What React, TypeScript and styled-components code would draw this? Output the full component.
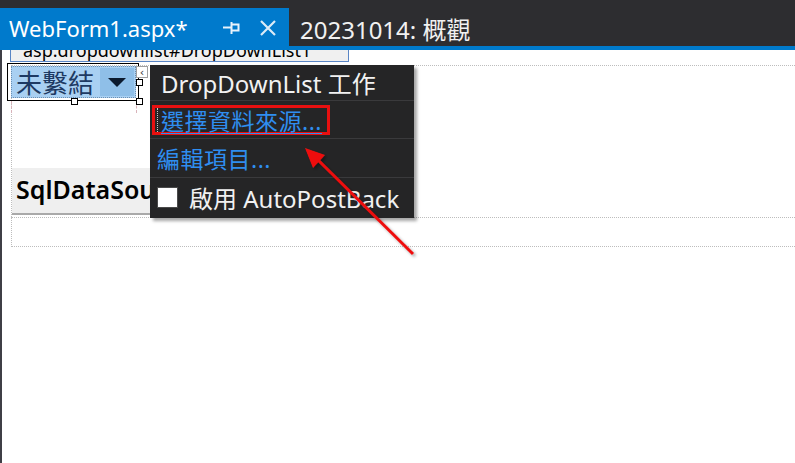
import React from 'react';
import styled, { createGlobalStyle } from 'styled-components';

const GlobalStyle = createGlobalStyle`
  html, body {
    margin: 0;
    padding: 0;
    background: #ffffff;
  }
  body {
    font-family: "Noto Sans", "Noto Sans CJK TC", sans-serif;
  }
`;

export default function App() {
  return (
    <Window>
      <GlobalStyle />
      <TabBar>
        <ActiveTab>
          <TabTitle>WebForm1.aspx*</TabTitle>
          <PinIcon />
          <CloseIcon />
        </ActiveTab>
        <Tab>20231014: 概觀</Tab>
      </TabBar>
      <BlueRule />

      <Designer>
        <TagLabel>
          <span>asp:dropdownlist#DropDownList1</span>
        </TagLabel>

        <FormArea>
          <Selection>
            <Combo>
              <ComboText>未繫結</ComboText>
              <ComboButton>
                <Triangle />
              </ComboButton>
            </Combo>
            <Handle $left={63} $top={34} />
            <Handle $left={128} $top={34} />
            <Handle $left={128} $top={15} />
            <SmartTag>‹</SmartTag>
          </Selection>
          <Guides />
          <SqlSource>SqlDataSource</SqlSource>
        </FormArea>
        <EmptyDiv />

        <TaskPanel>
          <PanelTitle>DropDownList 工作</PanelTitle>
          <PanelRow $height={38}>
            <Highlight>
              <FocusRect>
                <LinkText $underline>選擇資料來源...</LinkText>
              </FocusRect>
            </Highlight>
          </PanelRow>
          <PanelRow $height={39}>
            <LinkText>編輯項目...</LinkText>
          </PanelRow>
          <PanelRow $height={39}>
            <CheckBox />
            <CheckLabel>啟用 AutoPostBack</CheckLabel>
          </PanelRow>
        </TaskPanel>
      </Designer>

      <ArrowOverlay />
    </Window>
  );
}

const PinIcon = () => (
  <IconSvg width="20" height="16" viewBox="0 0 20 16" $ml={0}>
    <path d="M1 7.5h8M9.5 2v12M10 4.5h6.5v6H10" stroke="#e8f2fb" strokeWidth="2" fill="none" />
  </IconSvg>
);

const CloseIcon = () => (
  <IconSvg width="18" height="16" viewBox="0 0 18 16" $ml={17}>
    <path d="M2 1l14 14M16 1L2 15" stroke="#dcebf7" strokeWidth="2.2" fill="none" />
  </IconSvg>
);

const ArrowOverlay = () => (
  <ArrowSvg width="795" height="463" viewBox="0 0 795 463">
    <defs>
      <filter id="shadow" x="-20%" y="-20%" width="140%" height="140%">
        <feDropShadow dx="2" dy="2" stdDeviation="1.5" floodColor="#000" floodOpacity="0.35" />
      </filter>
    </defs>
    <g filter="url(#shadow)">
      <line x1="413" y1="254" x2="316" y2="158" stroke="#ee1111" strokeWidth="3" />
      <polygon points="305,148 325,155 313,168" fill="#ee1111" />
    </g>
  </ArrowSvg>
);

const Window = styled.div`
  position: relative;
  width: 795px;
  height: 463px;
  overflow: hidden;
  background: #ffffff;
`;

const TabBar = styled.div`
  display: flex;
  align-items: flex-end;
  height: 46px;
  background: #2d2d30;
`;

const ActiveTab = styled.div`
  display: flex;
  align-items: center;
  box-sizing: border-box;
  width: 289px;
  height: 38px;
  padding: 2px 12px 0 9px;
  background: #007acc;
`;

const TabTitle = styled.span`
  flex: 1;
  font-size: 22px;
  color: #ffffff;
  line-height: 36px;
  white-space: nowrap;
`;

const IconSvg = styled.svg<{ $ml: number }>`
  display: block;
  flex: none;
  margin-left: ${(p) => p.$ml}px;
`;

const Tab = styled.div`
  display: flex;
  align-items: center;
  height: 38px;
  padding: 2px 0 0 11px;
  box-sizing: border-box;
  font-size: 24px;
  color: #f1f1f1;
  white-space: nowrap;
`;

const BlueRule = styled.div`
  height: 4px;
  background: #007acc;
`;

const Designer = styled.div`
  position: relative;
  display: flex;
  flex-direction: column;
  height: 413px;
  border-left: 2px solid #3f3f46;
  background: #ffffff;
`;

const TagLabel = styled.div`
  box-sizing: border-box;
  width: 339px;
  height: 12px;
  margin-left: 8px;
  background: #f0f0f0;
  border: 1px solid #5a86c5;
  border-top: none;
  overflow: hidden;

  span {
    display: block;
    margin-top: -10px;
    padding-left: 12px;
    font-size: 18px;
    line-height: 20px;
    color: #000000;
    white-space: nowrap;
  }
`;

const FormArea = styled.div`
  display: flex;
  flex-direction: column;
  box-sizing: border-box;
  height: 152px;
  margin: 3px 0 0 9px;
  border-top: 1px dotted #bdbdbd;
  border-left: 1px dotted #bdbdbd;
`;

const Selection = styled.div`
  position: relative;
  box-sizing: border-box;
  width: 132px;
  height: 38px;
  margin: -3px 0 0 -5px;
  padding: 2px 2px 2px 3px;
  border: 1px solid #000000;
`;

const Combo = styled.div`
  display: flex;
  box-sizing: border-box;
  height: 100%;
  background: #a9d0f2;
  border: 1px dotted #6b8fb3;
`;

const ComboText = styled.span`
  flex: 1;
  padding-left: 4px;
  font-family: "Noto Sans CJK TC", sans-serif;
  font-size: 26px;
  line-height: 30px;
  color: #1e3a63;
  white-space: nowrap;
`;

const ComboButton = styled.div`
  display: flex;
  align-items: center;
  justify-content: center;
  width: 34px;
  margin: 1px;
  background: #8fbfe8;
`;

const Triangle = styled.div`
  width: 0;
  height: 0;
  border-left: 9px solid transparent;
  border-right: 9px solid transparent;
  border-top: 9px solid #0b1a2e;
`;

const Handle = styled.div<{ $left: number; $top: number }>`
  position: absolute;
  left: ${(p) => p.$left}px;
  top: ${(p) => p.$top}px;
  box-sizing: border-box;
  width: 7px;
  height: 7px;
  background: #ffffff;
  border: 1px solid #000000;
`;

const SmartTag = styled.div`
  position: absolute;
  left: 128px;
  top: 2px;
  box-sizing: border-box;
  width: 12px;
  height: 12px;
  display: flex;
  align-items: center;
  justify-content: center;
  background: #ffffff;
  border: 1px solid #a0a0a0;
  font-family: "DejaVu Sans", sans-serif;
  font-size: 11px;
  line-height: 1;
  color: #333333;
`;

const Guides = styled.div`
  width: 124px;
  height: 12px;
  margin-left: -1px;
  border-left: 1px dashed #d9b3ba;
  border-right: 1px dashed #d9b3ba;
`;

const SqlSource = styled.div`
  display: flex;
  align-items: center;
  box-sizing: border-box;
  width: 140px;
  height: 47px;
  margin-top: auto;
  margin-bottom: 2px;
  padding: 0 0 3px 4px;
  background: #efefef;
  border-bottom: 2px solid #a9a9a9;
  font-size: 25px;
  font-weight: 600;
  color: #000000;
  white-space: nowrap;
  overflow: hidden;
`;

const EmptyDiv = styled.div`
  box-sizing: border-box;
  height: 30px;
  margin-left: 9px;
  border-top: 1px dotted #bdbdbd;
  border-left: 1px dotted #bdbdbd;
  border-bottom: 1px dotted #bdbdbd;
`;

const TaskPanel = styled.div`
  position: absolute;
  left: 148px;
  top: 15px;
  width: 264px;
  height: 153px;
  display: flex;
  flex-direction: column;
  background: #252526;
  box-shadow: 3px 3px 3px rgba(0, 0, 0, 0.35);
`;

const PanelTitle = styled.div`
  height: 35px;
  padding-left: 11px;
  display: flex;
  align-items: center;
  font-size: 24px;
  color: #f1f1f1;
  white-space: nowrap;
`;

const PanelRow = styled.div<{ $height: number }>`
  display: flex;
  align-items: center;
  box-sizing: border-box;
  height: ${(p) => p.$height}px;
  padding-left: 7px;
  border-top: 1px solid #3a3a3c;
`;

const Highlight = styled.div`
  display: flex;
  align-items: center;
  box-sizing: border-box;
  width: 178px;
  height: 30px;
  margin-left: -5px;
  padding-left: 2px;
  border: 3px solid #e81010;
`;

const FocusRect = styled.div`
  display: flex;
  align-items: center;
  height: 24px;
  padding-left: 3px;
  border-left: 1px dotted #c8c8c8;
`;

const LinkText = styled.span<{ $underline?: boolean }>`
  font-size: 23px;
  letter-spacing: 0.5px;
  color: #2f8ef0;
  white-space: nowrap;
  text-decoration: ${(p) => (p.$underline ? 'underline' : 'none')};
  text-underline-offset: 3px;
  text-decoration-thickness: 1px;
`;

const CheckBox = styled.div`
  box-sizing: border-box;
  width: 21px;
  height: 21px;
  background: #ffffff;
  border: 1px solid #4a4a4a;
`;

const CheckLabel = styled.span`
  margin-left: 11px;
  font-size: 24px;
  color: #f1f1f1;
  white-space: nowrap;
`;

const ArrowSvg = styled.svg`
  position: absolute;
  left: 0;
  top: 0;
  pointer-events: none;
`;
